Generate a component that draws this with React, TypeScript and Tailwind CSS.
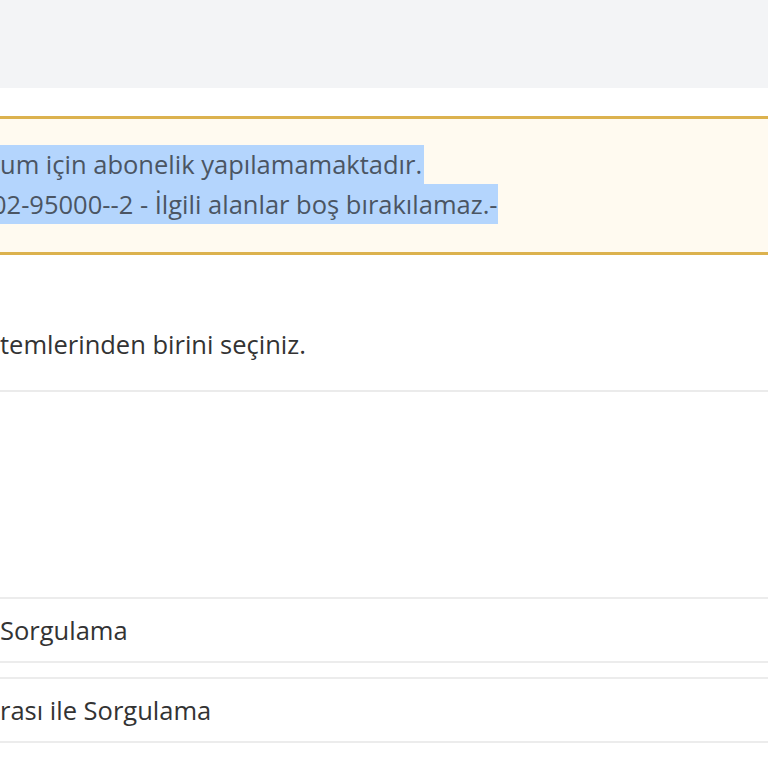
import React from 'react';

const rows = ['Sorgulama', 'rası ile Sorgulama'];

const App: React.FC = () => {
  return (
    <div className="min-h-[768px] w-[768px] overflow-hidden bg-white" style={{ fontFamily: '"Open Sans", "Noto Sans", sans-serif' }}>
      <div className="h-[88px] bg-[#f3f4f6]" />

      <div className="mt-[28px] border-y-[3px] border-[#dcb24e] bg-[#fffaf0] pt-[26px] pb-[28px] text-[25.5px] text-[#4b5563]">
        <div className="leading-[39px]">
          <span className="inline-block bg-[#b4d5fd] pr-[2px]">um için abonelik yapılamamaktadır.</span>
        </div>
        <div className="-ml-[8px] leading-[40px]">
          <span className="inline-block bg-[#b4d5fd]">02-95000--2 - İlgili alanlar boş bırakılamaz.-</span>
        </div>
      </div>

      <div className="flex h-[135px] items-center pt-[44px] text-[25.5px] text-[#333]">
        <span>temlerinden birini seçiniz.</span>
      </div>
      <div className="h-[2px] bg-[#ebebeb]" />

      <div className="h-[205px]" />

      <div className="flex flex-col gap-[14px]">
        {rows.map((r) => (
          <div key={r} className="flex h-[66px] items-center border-y-2 border-[#ececec] text-[25.5px] text-[#333]">
            {r}
          </div>
        ))}
      </div>
    </div>
  );
};

export default App;
